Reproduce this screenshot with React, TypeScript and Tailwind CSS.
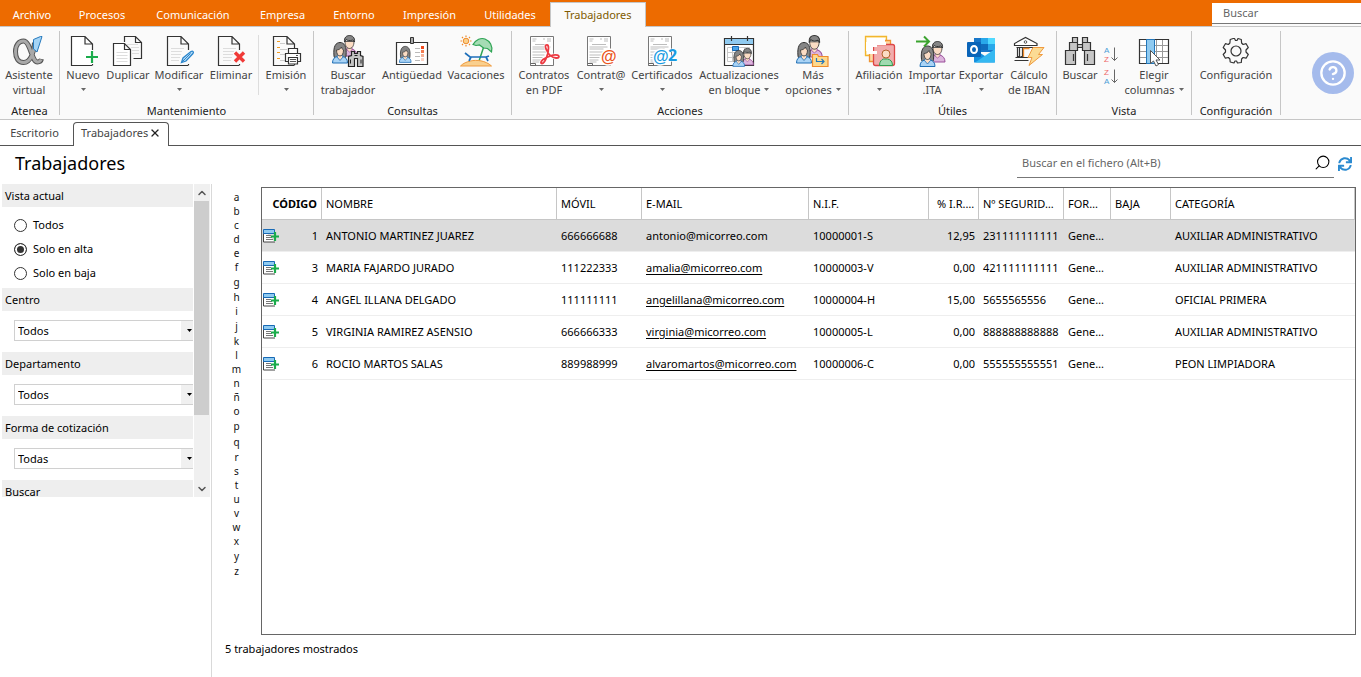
import React, { useState } from 'react';
import { ChevronDown, ChevronUp, CircleHelp, Search, X } from 'lucide-react';
import { FaSync } from 'react-icons/fa';

const menuTabs = [
  { label: 'Archivo', width: 'w-16' },
  { label: 'Procesos', width: 'w-[76px]' },
  { label: 'Comunicación', width: 'w-[106px]' },
  { label: 'Empresa', width: 'w-[73px]' },
  { label: 'Entorno', width: 'w-[70px]' },
  { label: 'Impresión', width: 'w-[81px]' },
  { label: 'Utilidades', width: 'w-20' },
];

const workers = [
  { code: 1, name: 'ANTONIO MARTINEZ JUAREZ', phone: '666666688', email: 'antonio@micorreo.com', nif: '10000001-S', irpf: '12,95', ss: '231111111111', category: 'AUXILIAR ADMINISTRATIVO' },
  { code: 3, name: 'MARIA FAJARDO JURADO', phone: '111222333', email: 'amalia@micorreo.com', nif: '10000003-V', irpf: '0,00', ss: '421111111111', category: 'AUXILIAR ADMINISTRATIVO' },
  { code: 4, name: 'ANGEL ILLANA DELGADO', phone: '111111111', email: 'angelillana@micorreo.com', nif: '10000004-H', irpf: '15,00', ss: '5655565556', category: 'OFICIAL PRIMERA' },
  { code: 5, name: 'VIRGINIA RAMIREZ ASENSIO', phone: '666666333', email: 'virginia@micorreo.com', nif: '10000005-L', irpf: '0,00', ss: '888888888888', category: 'AUXILIAR ADMINISTRATIVO' },
  { code: 6, name: 'ROCIO MARTOS SALAS', phone: '889988999', email: 'alvaromartos@micorreo.com', nif: '10000006-C', irpf: '0,00', ss: '555555555551', category: 'PEON LIMPIADORA' },
];

const letters = 'abcdefghijklmnñopqrstuvwxyz'.split('');

/* ---------- icons ---------- */

function Icon({ children }: { children: React.ReactNode }) {
  return (
    <svg viewBox="0 0 32 32" className="size-8 shrink-0 overflow-visible" fill="none" aria-hidden="true">
      {children}
    </svg>
  );
}

function Woman({ transform }: { transform?: string }) {
  return (
    <g transform={transform} strokeLinejoin="round">
      <path d="M2 14C1 4 4 .5 8 .5S15 4 14 14c0 2-2 3-3 2H5c-1 1-3 0-3-2Z" fill="#858585" stroke="#333" />
      <path d="M.5 21c0-4 2-6 5-6.500h5c3 .5 5 2.500 5 6.500Z" fill="#a9d3f5" stroke="#1f6fb5" />
      <path d="M5 15l3 3.500 3-3.500-1-2H6Z" fill="#fbdcc4" stroke="#1f6fb5" strokeWidth=".8" />
      <path d="M4.500 8c2 0 4-1 5-3 .5 2 1 2.500 2 3 0 3.500-1.500 6-3.500 6s-3.500-2.500-3.500-6Z" fill="#fbdcc4" stroke="#333" strokeWidth=".8" />
    </g>
  );
}

function Man({ transform }: { transform?: string }) {
  return (
    <g transform={transform} strokeLinejoin="round">
      <path d="M.5 21c0-4 2-6 5-7h5c3 1 5 3 5 7Z" fill="#dcb4dc" stroke="#9a4f9a" />
      <path d="M5.500 12v3l2.500 2 2.500-2v-3Z" fill="#fbdcc4" stroke="#9a4f9a" strokeWidth=".7" />
      <path d="M3.500 6.500C3.500 11 5.500 13.500 8 13.500s4.500-2.500 4.500-7Z" fill="#fbdcc4" stroke="#333" strokeWidth=".8" />
      <path d="M3 7C2.500 2.500 5 .5 8 .5S13.500 2.500 13 7l-1.500-2c-3 1-6 .5-7-.5Z" fill="#858585" stroke="#333" />
    </g>
  );
}

const AlphaIcon = () => (
  <Icon>
    <path d="M21.500 7.500c0 8-3.500 20-11 20-5 0-8-4.500-8-11s3.500-10.500 8-10.500c7 0 8 21 14 21 2 0 3.500-1 4-3" stroke="#555" strokeWidth="5" />
    <path d="M21.500 8c0 8-3.500 19.500-11 19.500-5 0-8-4.500-8-11s3.500-10.500 8-10.500c7 0 8 21 14 21 2 0 3-1 3.600-2.500" stroke="#a9a9a9" strokeWidth="3" />
    <path d="M20.500 4.500l7-3h1.500l-5 15.500-3.500-3Z" fill="#a5d4f5" stroke="#2579bd" />
  </Icon>
);

const Fold = ({ x }: { x: number }) => (
  <path transform={`translate(${x} 0)`} d="M21 15V9l-7.500-7.500H0v29h20.500M21 30.500V29M13.500 1.500V9H21" stroke="#333" strokeWidth="1.200" />
);

const TextLines = () => (
  <path d="M8 13.500h13M8 16.500h11M8 19.500h10M8 22.500h9M8 25.500h8" stroke="#ddd" />
);

const NewIcon = () => (
  <Icon>
    <path d="M4.500 1.500h14l7 8v21h-21Z" fill="#fff" />
    <Fold x={4.5} />
    <path d="M25 16v12M19 22h12" stroke="#1aab4b" strokeWidth="2.200" />
  </Icon>
);

const DuplicateIcon = () => (
  <Icon>
    <path d="M12.500 7V1.500h11l6 6v16h-8M23.500 1.500v6h6" stroke="#333" strokeWidth="1.200" />
    <path d="M15 9.500h11M19 12.500h8M20 15.500h7M20 18.500h7" stroke="#ddd" />
    <path d="M1.500 8.500h11l6 6v16h-17ZM12.500 8.500v6h6" fill="#fff" stroke="#333" strokeWidth="1.200" />
    <path d="M4.500 17.500h11M4.500 20.500h11M4.500 23.500h11M4.500 26.500h11" stroke="#ddd" />
  </Icon>
);

const EditIcon = () => (
  <Icon>
    <Fold x={4.5} />
    <TextLines />
    <path d="M18.500 27.500l1.500-4.500 8-6.500c2-1 3 .5 2 2l-7 7.500Z" fill="#b9ddf7" stroke="#2b86cc" strokeWidth="1.300" />
    <path d="M18.500 27.500l9-9" stroke="#2b86cc" />
  </Icon>
);

const DeleteIcon = () => (
  <Icon>
    <Fold x={3.5} />
    <TextLines />
    <path d="M20 17.500l9 9M29 17.500l-9 9" stroke="#f03a37" strokeWidth="3.400" />
  </Icon>
);

const PrintIcon = () => (
  <Icon>
    <Fold x={3.5} />
    <path d="M7 6.500h3M7 12.500h3M7 17.500h3M7 23.500h3" stroke="#f39a1e" strokeWidth="1.200" />
    <path d="M10 8.500h5M10 14.500h7M10 19.500h5M10 25.500h5" stroke="#ccc" />
    <path d="M18.500 13.500h9v5h-9ZM15.500 18.500h15v8h-15Z" fill="#fff" stroke="#333" strokeWidth="1.200" />
    <path d="M18.500 22.500h9v6.500h-9Z" fill="#fff" stroke="#333" strokeWidth="1.200" />
    <path d="M20 24.500h6M20 26.500h6M26 20.500h2" stroke="#555" />
  </Icon>
);

const FindWorkerIcon = () => (
  <Icon>
    <Man transform="translate(9.500 0)" />
    <Woman transform="translate(0 7)" />
    <path d="M19.500 16.500h3v2h3v-2h3v4l2.500 1v10h-5.500v-8h-3v8h-6v-10l3-1Z" fill="#c4c4c4" stroke="#222" strokeWidth="1.200" />
    <path d="M18.500 24.500v4M29 24.500v4M22.500 20.500h3" stroke="#222" />
  </Icon>
);

const BadgeIcon = () => (
  <Icon>
    <path d="M.5 7.500h31v22H.5Z" fill="#fff" stroke="#333" strokeWidth="1.200" />
    <path d="M14.500 2.500h3v6h-3Z" fill="#aaa" stroke="#333" />
    <Woman transform="translate(3 11) scale(.78)" />
    <path d="M19 13.500h5M19 17.500h5M19 21.500h5M19 25.500h5" stroke="#bbb" />
    <path d="M25 11h3v3h-3Z" fill="#ee4a1d" />
    <path d="M25 15h3v3h-3Z" fill="#f37b50" />
    <path d="M25 19h3v3h-3Z" fill="#f8b095" />
    <path d="M25 23h3v3h-3Z" fill="#fbd3c4" />
  </Icon>
);

const HolidayIcon = () => (
  <Icon>
    <circle cx="6" cy="6" r="2.800" fill="#fbd08a" stroke="#ef8a2a" />
    <path d="M6 .5V2M6 10v1.500M.5 6H2M10 6h1.500M2 2l1 1M9 9l1 1M10 2L9 3M3 9l-1 1" stroke="#ef8a2a" strokeWidth="1.200" />
    <path d="M13 9.500C16 4.500 21 2.500 25 4c5 2 8 7 6.500 13l-4-3.500-4-.5-4-3-3.500.5Z" fill="#a5dcb4" stroke="#2fa455" strokeWidth="1.200" />
    <path d="M23.500 12.500L19 26" stroke="#2fa455" strokeWidth="1.500" />
    <path d="M.5 31c3-3 6-4 10-5 6-1.500 15-.5 21 5Z" fill="#f9cf8e" stroke="#ef9a3e" />
    <path d="M5 18l5 4h16l3-1M11 22l-2 4M26 22l2 4" stroke="#1e6fba" strokeWidth="1.700" />
  </Icon>
);

const ContractPage = () => (
  <>
    <path d="M2.500 1.500h23v29h-23Z" fill="#fff" stroke="#777" />
    <path d="M4.500 4h4M15 4h2M19 4h4M4.500 6h3M19 6h4M7 9.500h14M4.500 12h18M4.500 14h14M4.500 17h17M4.500 20h12M4.500 22.500h10M4.500 25h9M4.500 27h7" stroke="#bdbdbd" />
    <path d="M2.500 28.500h5v2h-5" stroke="#666" />
  </>
);

const PdfIcon = () => (
  <Icon>
    <ContractPage />
    <path d="M19 10c-2-.5-2 2-.5 5 1.500 3.500 5 7.500 9.500 8 3 .2 4-2 1.500-2.800C26 19 19 21.500 15 24.500c-2.500 2-2.500 4-1 4C17 28 20.500 19 20.500 13c0-2-.5-3-1.500-3Z" stroke="#fff" strokeWidth="3" />
    <path d="M19 10c-2-.5-2 2-.5 5 1.500 3.500 5 7.500 9.500 8 3 .2 4-2 1.500-2.800C26 19 19 21.500 15 24.500c-2.500 2-2.500 4-1 4C17 28 20.500 19 20.500 13c0-2-.5-3-1.500-3Z" stroke="#ec3b43" strokeWidth="1.800" />
  </Icon>
);

const ContractIcon = () => (
  <Icon>
    <ContractPage />
    <text x="16" y="27" fontSize="16" fill="#ea5522" stroke="#fff" strokeWidth="3" paintOrder="stroke" className="font-['Liberation_Sans'] font-bold">@</text>
  </Icon>
);

const CertificateIcon = () => (
  <Icon>
    <ContractPage />
    <text x="7" y="27" fontSize="16" fill="#189be2" stroke="#fff" strokeWidth="3" paintOrder="stroke" className="font-['Liberation_Sans'] font-bold">@</text>
    <text x="22" y="26" fontSize="16" fill="#189be2" stroke="#fff" strokeWidth="1" paintOrder="stroke" className="font-['Noto_Sans'] font-bold">2</text>
  </Icon>
);

const CalendarIcon = () => (
  <Icon>
    <path d="M1.500 3.500h29v27h-29Z" fill="#fff" stroke="#333" strokeWidth="1.200" />
    <path d="M2 4h28v5H2Z" fill="#8fcaf0" />
    <path d="M1.500 9.500h29M8.500 1v5M24.500 1v5" stroke="#333" strokeWidth="1.200" />
    <path d="M4.500 12.500h22v14h-22ZM4.500 17.500h22M4.500 22.500h22M9.500 12.500v14M15.500 12.500v14M21.500 12.500v14" stroke="#c8c8c8" />
    <path d="M9.500 11.500h6v4h-6Z" fill="#49a3e8" stroke="#1769b5" />
    <Man transform="translate(18 13) scale(.8)" />
    <Woman transform="translate(9.500 15) scale(.78)" />
  </Icon>
);

const MoreIcon = () => (
  <Icon>
    <Man transform="translate(9 0) scale(1.050)" />
    <Woman transform="translate(-1 7)" />
    <path d="M15.500 19.500h5l1 2h9.500v10H15.500Z" fill="#fdd88b" stroke="#ef8b2c" strokeWidth="1.200" />
    <path d="M19.500 23v3.500h7M24.500 24l2.500 2.500-2.500 2.500" stroke="#2277bd" strokeWidth="1.200" />
  </Icon>
);

const AffiliationIcon = () => (
  <Icon>
    <path d="M2.500 1.500h21v19h-21Z" fill="#fff3cd" stroke="#f2b62e" strokeWidth="1.300" />
    <path d="M6.500 5.500h21v21h-21Z" fill="#fdd9a5" stroke="#ef9433" strokeWidth="1.300" />
    <rect x="10.500" y="9.500" width="21" height="21" rx="2" fill="#f1acac" stroke="#dd4646" strokeWidth="1.300" />
    <path d="M4 3h18v4h1v3H14v2h-4v4h4v3H4v-3H3V7h1Z" fill="#fff" />
    <path d="M16.500 30.500c0-4 2-6 4-6.500h4c3 .5 5 2.500 5 6.500Z" fill="#9fdab0" stroke="#2f9e50" />
    <circle cx="23" cy="19" r="4" fill="#fbdcc4" stroke="#b3622d" />
  </Icon>
);

const ImportIcon = () => (
  <Icon>
    <Man transform="translate(13.500 6)" />
    <Woman transform="translate(3.500 10.500)" />
    <path d="M0 6.500h12M8 1.500l5 5-5 5" stroke="#3ba32f" strokeWidth="2" />
  </Icon>
);

const OutlookIcon = () => (
  <Icon>
    <path d="M9 3h21v14H9Z" fill="#1877c9" />
    <path d="M16 3h7v6h-7Z" fill="#28a8ea" />
    <path d="M23 3h7v6h-7Z" fill="#50d9ff" />
    <path d="M16 9h7v6h-7Z" fill="#0f6cbd" />
    <path d="M23 9h7v6h-7Z" fill="#28a8ea" />
    <path d="M9 14l21 13.500H9Z" fill="#1490df" />
    <path d="M30 14v13.500H10Z" fill="#35b8f1" />
    <rect x="2" y="7" width="14" height="15" rx="1" fill="#0a64b8" />
    <ellipse cx="9" cy="14.500" rx="3" ry="3.500" stroke="#fff" strokeWidth="2" />
  </Icon>
);

const BankIcon = () => (
  <Icon>
    <path d="M1.500 10.500v-2l11-6 11.500 6v2ZM3.500 12.500h18" fill="#fff" stroke="#333" strokeWidth="1.200" />
    <circle cx="12.500" cy="7" r="1.300" stroke="#555" />
    <path d="M4.500 13v8.500h2V13M9.500 13v8.500h-2M20.500 13v4M1.500 25.500h14M2.500 22.500h13" stroke="#333" strokeWidth="1.200" />
    <path d="M10.500 22v-8.500h6" stroke="#ef8b2c" strokeWidth="1.300" />
    <path d="M20 12.500h11l-5.500 7h4L16 30.500l3-8h-4Z" fill="#fbdb94" stroke="#ef9a3e" />
  </Icon>
);

const BinocularsIcon = () => (
  <Icon>
    <path d="M1.500 15.500h10v14h-10ZM20.500 15.500h10v14h-10ZM5.500 7.500h8v8h-8ZM18.500 7.500h8v8h-8ZM8.500 2.500h5v5h-5ZM18.500 2.500h5v5h-5ZM13.500 9.500h5v3h-5Z" fill="#c6c6c6" stroke="#333" strokeWidth="1.200" />
    <path d="M9.500 19v7M23.500 19v7" stroke="#333" strokeWidth="1.200" />
  </Icon>
);

const ColumnsIcon = () => (
  <Icon>
    <path d="M1.500 4.500h29v24h-29Z" fill="#fff" stroke="#333" strokeWidth="1.200" />
    <path d="M2 10.500h28M2 16.500h28M2 22.500h28M18.500 5v23M24.500 5v23" stroke="#999" />
    <path d="M8.500 4.500h8v24h-8Z" fill="#8fcaf0" stroke="#2377bb" />
    <path d="M12.500 15.500v13l3-2.500 2.500 5 2.500-1.500-2.500-4.500h4Z" fill="#fff" stroke="#555" />
  </Icon>
);

const GearIcon = () => (
  <Icon>
    <path d="M13.200 3.500h1.300l1 2h1.500l1-2 3.300 1 .3 3.500 1.500 1.500 3-.8 2.200 3.800-2.300 2.500v2l2.300 2.500-2.200 3.700-3-.7-1.500 1.500-.3 3.500-3.800.5-1-2h-1.500l-1 2-3.800-1-.3-3-1.500-1.500-3 .7-2.200-3.700L5.500 17v-2l-2.300-2.500 2.200-3.800 3 .8L9.900 8l.3-3.500Z" stroke="#333" strokeWidth="1.200" strokeLinejoin="round" />
    <circle cx="16" cy="16" r="5" stroke="#333" strokeWidth="1.200" />
  </Icon>
);

function SortButton({ top, bottom, label }: { top: string; bottom: string; label: string }) {
  return (
    <button aria-label={label}>
      <svg viewBox="0 0 18 22" className="h-[22px] w-[18px] font-['Liberation_Sans']" fill="none" aria-hidden="true">
        <text x="1" y="8" fontSize="8" fill={top === 'A' ? '#4a9fd8' : '#ee6868'}>{top}</text>
        <text x="1" y="17" fontSize="8" fill={bottom === 'A' ? '#4a9fd8' : '#ee6868'}>{bottom}</text>
        <path d="M11.500 2.500v13M8.500 12.500l3 3 3-3" stroke="#666" />
      </svg>
    </button>
  );
}

const RowIcon = () => (
  <svg viewBox="0 0 16 14" className="h-3.5 w-4" fill="none" aria-hidden="true">
    <path d="M.5 1v12H12" fill="#fff" stroke="#444" />
    <path d="M.5.5h11v4H.5Z" fill="#8fcaf0" stroke="#1769b5" />
    <path d="M3 6.500h5M3 8.500h6M3 10.500h7" stroke="#777" />
    <path d="M12 3v9M8 7.500h8" stroke="#1aab4b" strokeWidth="2.200" />
  </svg>
);

const Caret = () => (
  <svg viewBox="0 0 5 3" className="h-[3px] w-[5px]" aria-hidden="true">
    <path d="M0 0h5L2.500 3Z" fill="#666" />
  </svg>
);

/* ---------- ribbon ---------- */

interface RibbonButtonProps {
  icon: React.ReactNode;
  text: string;
  second?: string;
  menu?: boolean;
  width: string;
}

function RibbonButton({ icon, text, second, menu, width }: RibbonButtonProps) {
  return (
    <button className={`flex shrink-0 flex-col items-center whitespace-nowrap text-[#444] ${width}`}>
      {icon}
      <span>{text}</span>
      {(second || menu) && (
        <span className="flex h-[15px] items-center gap-1">
          {second}
          {menu && <Caret />}
        </span>
      )}
    </button>
  );
}

function RibbonGroup({ title, children, width }: { title: string; children: React.ReactNode; width: string }) {
  return (
    <section className={`flex shrink-0 py-1 ${width}`}>
      <div className="flex flex-1 flex-col border-r border-[#c6c6c6] pt-1">
        <div className="flex h-[68px] items-start">{children}</div>
        <h2 className="h-3 text-center text-[#222]">{title}</h2>
      </div>
    </section>
  );
}

function Ribbon() {
  return (
    <div className="flex border-b border-[#c6c6c6] bg-[#fafafa] text-[11px] leading-[15px]">
      <RibbonGroup title="Atenea" width="w-[60px]">
        <RibbonButton icon={<AlphaIcon />} text="Asistente" second="virtual" width="w-[58px]" />
      </RibbonGroup>
      <RibbonGroup title="Mantenimiento" width="w-[254px]">
        <RibbonButton icon={<NewIcon />} text="Nuevo" menu width="w-[46px]" />
        <RibbonButton icon={<DuplicateIcon />} text="Duplicar" width="w-11" />
        <RibbonButton icon={<EditIcon />} text="Modificar" menu width="w-[58px]" />
        <RibbonButton icon={<DeleteIcon />} text="Eliminar" width="w-[46px]" />
        <div className="ml-1 h-[60px] border-r border-[#ddd]" />
        <RibbonButton icon={<PrintIcon />} text="Emisión" menu width="w-[54px]" />
      </RibbonGroup>
      <RibbonGroup title="Consultas" width="w-[198px]">
        <RibbonButton icon={<FindWorkerIcon />} text="Buscar" second="trabajador" width="w-[68px]" />
        <RibbonButton icon={<BadgeIcon />} text="Antigüedad" width="w-[60px]" />
        <RibbonButton icon={<HolidayIcon />} text="Vacaciones" width="w-[68px]" />
      </RibbonGroup>
      <RibbonGroup title="Acciones" width="w-[337px]">
        <RibbonButton icon={<PdfIcon />} text="Contratos" second="en PDF" width="w-16" />
        <RibbonButton icon={<ContractIcon />} text="Contrat@" menu width="w-[50px]" />
        <RibbonButton icon={<CertificateIcon />} text="Certificados" menu width="w-[72px]" />
        <RibbonButton icon={<CalendarIcon />} text="Actualizaciones" second="en bloque" menu width="w-[82px]" />
        <RibbonButton icon={<MoreIcon />} text="Más" second="opciones" menu width="w-[66px]" />
      </RibbonGroup>
      <RibbonGroup title="Útiles" width="w-[208px]">
        <RibbonButton icon={<AffiliationIcon />} text="Afiliación" menu width="w-[60px]" />
        <RibbonButton icon={<ImportIcon />} text="Importar" second=".ITA" width="w-[46px]" />
        <RibbonButton icon={<OutlookIcon />} text="Exportar" menu width="w-[52px]" />
        <RibbonButton icon={<BankIcon />} text="Cálculo" second="de IBAN" width="w-11" />
      </RibbonGroup>
      <RibbonGroup title="Vista" width="w-[135px]">
        <RibbonButton icon={<BinocularsIcon />} text="Buscar" width="w-[46px]" />
        <div className="flex w-[18px] flex-col pt-2.5">
          <SortButton top="A" bottom="Z" label="Orden ascendente" />
          <SortButton top="Z" bottom="A" label="Orden descendente" />
        </div>
        <RibbonButton icon={<ColumnsIcon />} text="Elegir" second="columnas" menu width="w-[66px]" />
      </RibbonGroup>
      <RibbonGroup title="Configuración" width="w-[89px]">
        <RibbonButton icon={<GearIcon />} text="Configuración" width="w-[88px]" />
      </RibbonGroup>
      <div className="flex flex-1 items-center justify-end pr-[7px]">
        <button aria-label="Ayuda" className="flex size-[42px] items-center justify-center rounded-full bg-[#a5bbec] text-white">
          <CircleHelp size={28} strokeWidth={2} />
        </button>
      </div>
    </div>
  );
}

function MenuBar() {
  return (
    <header className="flex h-[27px] items-start border-b border-[#c6c6c6] bg-[#ed6b00] text-[11px] leading-4 text-white">
      <nav className="flex h-[27px] flex-1 items-end">
        {menuTabs.map((tab) => (
          <button key={tab.label} className={`h-6 ${tab.width}`}>
            {tab.label}
          </button>
        ))}
        <button className="h-[25px] w-24 border border-b-0 border-[#c6c6c6] bg-[#fafafa] text-[#7f5a00]">
          Trabajadores
        </button>
      </nav>
      <div className="mt-[3px] h-[23px] w-[149px] bg-[#fafafa]">
        <input
          aria-label="Buscar"
          placeholder="Buscar"
          className="block h-[21px] w-full border-b border-[#777] bg-white px-[11px] pb-0.5 text-black outline-none placeholder:text-[#666]"
        />
      </div>
    </header>
  );
}

/* ---------- filters ---------- */

function FilterTitle({ children }: { children: React.ReactNode }) {
  return <h2 className="h-[23px] bg-[#eee] pl-[3px] leading-6">{children}</h2>;
}

function FilterSelect({ label, option }: { label: string; option: string }) {
  return (
    <div>
      <FilterTitle>{label}</FilterTitle>
      <div className="relative ml-3 mt-[9px] mb-[11px] h-[21px]">
        <select aria-label={label} className="h-full w-full appearance-none border border-r-0 border-[#d0d0d0] bg-white pl-[3px] outline-none">
          <option>{option}</option>
        </select>
        <span className="pointer-events-none absolute top-px right-0 bottom-px flex w-3 items-center justify-end bg-[#f0f0f0] pr-px">
          <svg viewBox="0 0 5 3" className="h-[3px] w-[5px]" aria-hidden="true">
            <path d="M0 0h5L2.500 3Z" fill="#000" />
          </svg>
        </span>
      </div>
    </div>
  );
}

function Sidebar() {
  const [view, setView] = useState('Solo en alta');

  return (
    <aside className="w-[212px] shrink-0 border-r border-[#d9d9d9]">
      <div className="flex h-[313px] overflow-hidden">
        <div className="ml-0.5 w-[191px] overflow-hidden">
          <FilterTitle>Vista actual</FilterTitle>
          <div className="flex flex-col pt-1.5 pb-[3px] pl-3">
            {['Todos', 'Solo en alta', 'Solo en baja'].map((item) => (
              <label key={item} className="flex h-6 items-center gap-1.5">
                <input
                  type="radio"
                  name="view"
                  checked={view === item}
                  onChange={() => setView(item)}
                  className="size-[13px] appearance-none rounded-full border border-[#333] bg-white checked:bg-[#333] checked:shadow-[inset_0_0_0_2px_white]"
                />
                {item}
              </label>
            ))}
          </div>
          <FilterSelect label="Centro" option="Todos" />
          <FilterSelect label="Departamento" option="Todos" />
          <FilterSelect label="Forma de cotización" option="Todas" />
          <FilterTitle>Buscar</FilterTitle>
        </div>
        <div className="ml-px flex w-4 flex-col bg-[#f0f0f0] text-[#555]">
          <button aria-label="Subir" className="flex h-[17px] items-center justify-center">
            <ChevronUp size={12} strokeWidth={3} />
          </button>
          <div className="h-[214px] w-[15px] bg-[#cdcdcd]" />
          <button aria-label="Bajar" className="mt-auto flex h-[17px] items-center justify-center">
            <ChevronDown size={12} strokeWidth={3} />
          </button>
        </div>
      </div>
    </aside>
  );
}

function Alphabet() {
  return (
    <nav className="flex w-[49px] shrink-0 flex-col items-center pt-[3px] text-[10px] leading-[14px] text-[#111]">
      {letters.map((letter) => (
        <button key={letter} className={'gjpqy'.includes(letter) ? 'h-4' : 'h-3.5'}>
          {letter}
        </button>
      ))}
    </nav>
  );
}

/* ---------- grid ---------- */

const th = 'truncate border-r border-b border-[#c6c6c6] px-1 text-left font-normal';
const td = 'truncate border-b border-[#eee] px-1';

function WorkersTable() {
  return (
    <div className="flex-1 border border-[#666]">
      <table className="w-full table-fixed border-separate border-spacing-0">
        <colgroup>
          <col className="w-[60px]" />
          <col className="w-[235px]" />
          <col className="w-[85px]" />
          <col className="w-[167px]" />
          <col className="w-[120px]" />
          <col className="w-[50px]" />
          <col className="w-[85px]" />
          <col className="w-[47px]" />
          <col className="w-[60px]" />
          <col />
        </colgroup>
        <thead>
          <tr className="h-8">
            <th className="border-r border-b border-[#c6c6c6] pr-1 text-right font-bold">CÓDIGO</th>
            <th className={th}>NOMBRE</th>
            <th className={th}>MÓVIL</th>
            <th className={th}>E-MAIL</th>
            <th className={th}>N.I.F.</th>
            <th className="truncate border-r border-b border-[#c6c6c6] pr-0.5 pl-2 text-left font-normal">% I.R.P.F.</th>
            <th className={th}>Nº SEGURIDAD SOCIAL</th>
            <th className={th}>FORMA</th>
            <th className={th}>BAJA</th>
            <th className={th}>CATEGORÍA</th>
          </tr>
        </thead>
        <tbody>
          {workers.map((worker, index) => (
            <tr key={worker.code} className={index === 0 ? 'h-8 bg-[#dcdcdc]' : 'h-8'}>
              <td className="border-b border-[#eee] pr-1 pl-px">
                <span className="flex items-center justify-between">
                  <RowIcon />
                  {worker.code}
                </span>
              </td>
              <td className={td}>{worker.name}</td>
              <td className={td}>{worker.phone}</td>
              <td className={td}>
                <a href={`mailto:${worker.email}`} className={index === 0 ? '' : 'underline underline-offset-2'}>
                  {worker.email}
                </a>
              </td>
              <td className={td}>{worker.nif}</td>
              <td className="border-b border-[#eee] pr-1 text-right">{worker.irpf}</td>
              <td className={td}>{worker.ss}</td>
              <td className={td}>General</td>
              <td className={td} />
              <td className={td}>{worker.category}</td>
            </tr>
          ))}
        </tbody>
      </table>
    </div>
  );
}

export default function App() {
  return (
    <div className="flex min-h-screen flex-col bg-white font-['Noto_Sans','Open_Sans',sans-serif] text-[11px] leading-4 text-black">
      <MenuBar />
      <Ribbon />

      <div className="flex h-[26px] shrink-0 items-end border-b border-[#555] text-[#444]">
        <button className="h-6 w-[73px] pr-1 pb-px">Escritorio</button>
        <div className="-mb-px flex h-6 w-24 items-center rounded-t border border-b-0 border-[#555] bg-white pb-1 pl-[7px]">
          <button>Trabajadores</button>
          <button aria-label="Cerrar" className="ml-px text-[#222]">
            <X size={12} strokeWidth={2.5} />
          </button>
        </div>
      </div>

      <div className="flex h-[38px] shrink-0 items-start justify-between pr-[9px] pl-[15px]">
        <h1 className="pt-[5px] text-[18px] leading-6">Trabajadores</h1>
        <div className="flex items-center gap-1 pt-1">
          <div className="flex h-7 w-[317px] items-center border-b border-[#777] pr-[3px] pb-0.5 pl-[5px]">
            <input
              aria-label="Buscar en el fichero"
              placeholder="Buscar en el fichero (Alt+B)"
              className="flex-1 outline-none placeholder:text-[#666]"
            />
            <button aria-label="Buscar" className="-scale-x-100">
              <Search size={17} strokeWidth={1.5} />
            </button>
          </div>
          <button aria-label="Actualizar" className="text-[#2b8ad0]">
            <FaSync size={14} />
          </button>
        </div>
      </div>

      <main className="flex flex-1">
        <Sidebar />
        <div className="flex flex-1 flex-col">
          <div className="flex flex-1 pt-[3px] pr-[5px]">
            <Alphabet />
            <WorkersTable />
          </div>
          <p className="h-[42px] pt-1.5 pl-[13px]">5 trabajadores mostrados</p>
        </div>
      </main>
    </div>
  );
}
